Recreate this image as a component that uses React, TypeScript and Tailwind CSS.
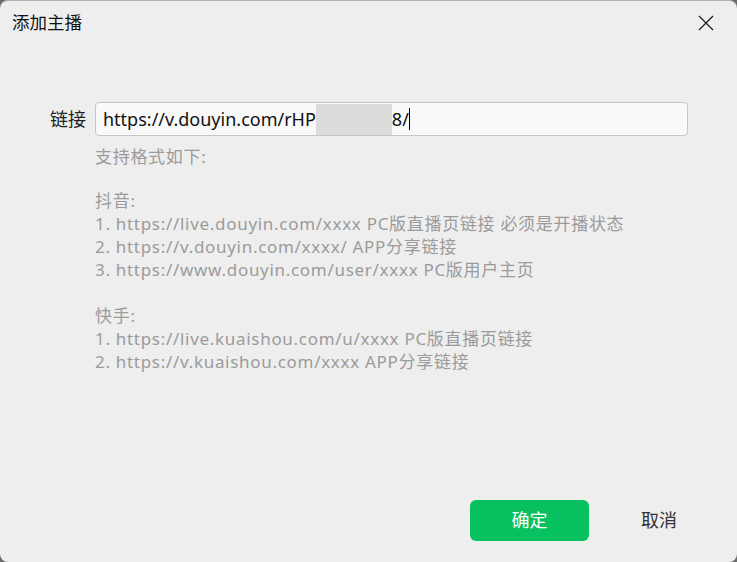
const help = [
  "支持格式如下:",
  "",
  "抖音:",
  "1. https://live.douyin.com/xxxx PC版直播页链接 必须是开播状态",
  "2. https://v.douyin.com/xxxx/ APP分享链接",
  "3. https://www.douyin.com/user/xxxx PC版用户主页",
  "",
  "快手:",
  "1. https://live.kuaishou.com/u/xxxx PC版直播页链接",
  "2. https://v.kuaishou.com/xxxx APP分享链接",
]

export default function App() {
  return (
    <div
      className="w-[737px] h-[562px] bg-[#6b6b6b]"
      style={{ fontFamily: '"Noto Sans", "Noto Sans CJK SC", sans-serif' }}
    >
      <div className="flex h-full flex-col rounded-lg border-t border-[#b4b4b4] bg-[#eeeeee]">
        {/* title bar */}
        <div className="flex h-[44px] items-center justify-between pl-3 pr-[23px]">
          <span className="text-[17.5px] text-[#111] leading-none">添加主播</span>
          <svg width="16" height="16" viewBox="0 0 16 16" className="text-[#1a1a1a]">
            <path d="M1 1 L15 15 M15 1 L1 15" stroke="currentColor" strokeWidth="1.2" />
          </svg>
        </div>

        <div className="mt-[57px] flex items-center pl-[50px] pr-[49px]">
          <span className="w-[45px] text-[18px] text-[#222]">链接</span>
          <div className="flex h-[34px] flex-1 items-center rounded-[4px] border border-[#c6c6c6] bg-[#f9f9f9] pl-[7px]">
            <span className="text-[18px] text-[#111] leading-none">https://v.douyin.com/rHP</span>
            <span className="h-[31px] w-[76px] bg-[#dcdcdc]" />
            <span className="text-[18px] text-[#111] leading-none">8/</span>
            <span className="h-[22px] w-px bg-black" />
          </div>
        </div>

        <div className="mt-[9px] pl-[95px] text-[17px] tracking-[0.7px] leading-[23px] text-[#9b9b9b]">
          {help.map((line, i) => (
            <div
              key={i}
              className={line ? "h-[23px] whitespace-nowrap" : i === 1 ? "h-[21px]" : "h-[23px]"}
            >
              {line}
            </div>
          ))}
        </div>

        <div className="mt-auto mb-[21px] flex items-center justify-end pr-[60px]">
          <button className="h-[41px] w-[119px] rounded-[6px] bg-[#07c160] text-[18px] text-white">
            确定
          </button>
          <button className="ml-[52px] text-[18px] text-[#333]">取消</button>
        </div>
      </div>
    </div>
  )
}
